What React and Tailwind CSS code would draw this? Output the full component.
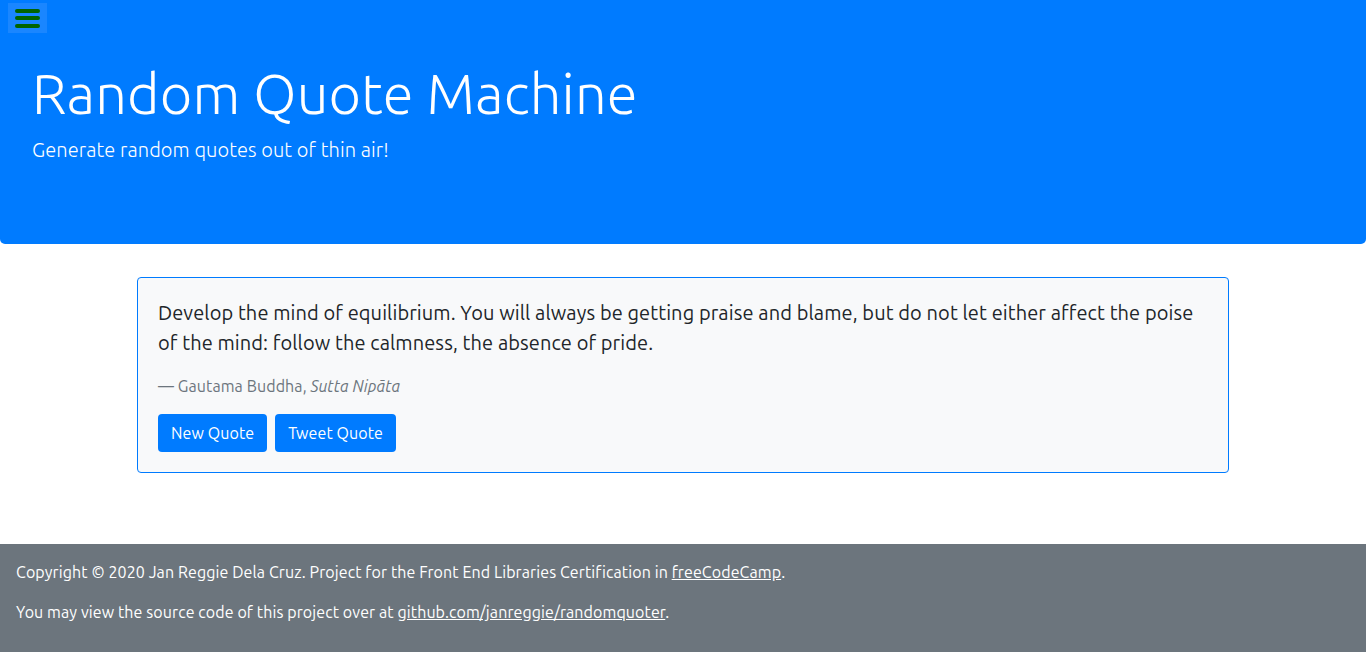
export default function App() {
  return (
    <div className="min-h-[652px] bg-white tracking-[0.006em]" style={{ fontFamily: '"Ubuntu", "Open Sans", "Noto Sans", sans-serif' }}>
      <header className="relative h-[244px] rounded-b-[5px] bg-[#007bff] px-8 pt-[60px] text-white">
        <button
          type="button"
          aria-label="Menu"
          className="absolute left-2 top-[3px] flex h-[30px] w-[39px] flex-col items-center justify-center gap-[3.5px] bg-[#1a86ff]"
        >
          <span className="block h-[4px] w-[25px] rounded-full bg-[#006400]" />
          <span className="block h-[4px] w-[25px] rounded-full bg-[#006400]" />
          <span className="block h-[4px] w-[25px] rounded-full bg-[#006400]" />
        </button>
        <h1 className="text-[56px] font-light leading-[1.2] tracking-[0.003em]">Random Quote Machine</h1>
        <p className="mt-[8px] text-[20px] font-light leading-[1.5]">Generate random quotes out of thin air!</p>
      </header>

      <main className="pt-[33px] pb-[71px]">
        <div className="mx-auto w-[1092px] rounded-[4px] border border-[#007bff] bg-[#f8f9fa] px-5 pt-[20px] pb-5">
          <p className="text-[20px] leading-[30px] text-[#212529]">
            Develop the mind of equilibrium. You will always be getting praise and blame, but do not let either affect the poise of the mind: follow the calmness, the absence of pride.
          </p>
          <p className="mt-[16px] text-[16px] leading-[24px] text-[#6c757d]">
            — Gautama Buddha, <cite className="italic">Sutta Nipāta</cite>
          </p>
          <div className="mt-[16px] flex gap-2">
            <button type="button" className="h-[38px] rounded-[4px] bg-[#007bff] px-[13px] text-[16px] text-white">New Quote</button>
            <button type="button" className="h-[38px] rounded-[4px] bg-[#007bff] px-[13px] text-[16px] text-white">Tweet Quote</button>
          </div>
        </div>
      </main>

      <footer className="h-[108px] bg-[#6c757d] px-4 pt-4 text-[16px] leading-[24px] text-white">
        <p>
          Copyright © 2020 Jan Reggie Dela Cruz. Project for the Front End Libraries Certification in{' '}
          <a href="#" className="underline">freeCodeCamp</a>.
        </p>
        <p className="mt-4">
          You may view the source code of this project over at{' '}
          <a href="#" className="underline">github.com/janreggie/randomquoter</a>.
        </p>
      </footer>
    </div>
  );
}
